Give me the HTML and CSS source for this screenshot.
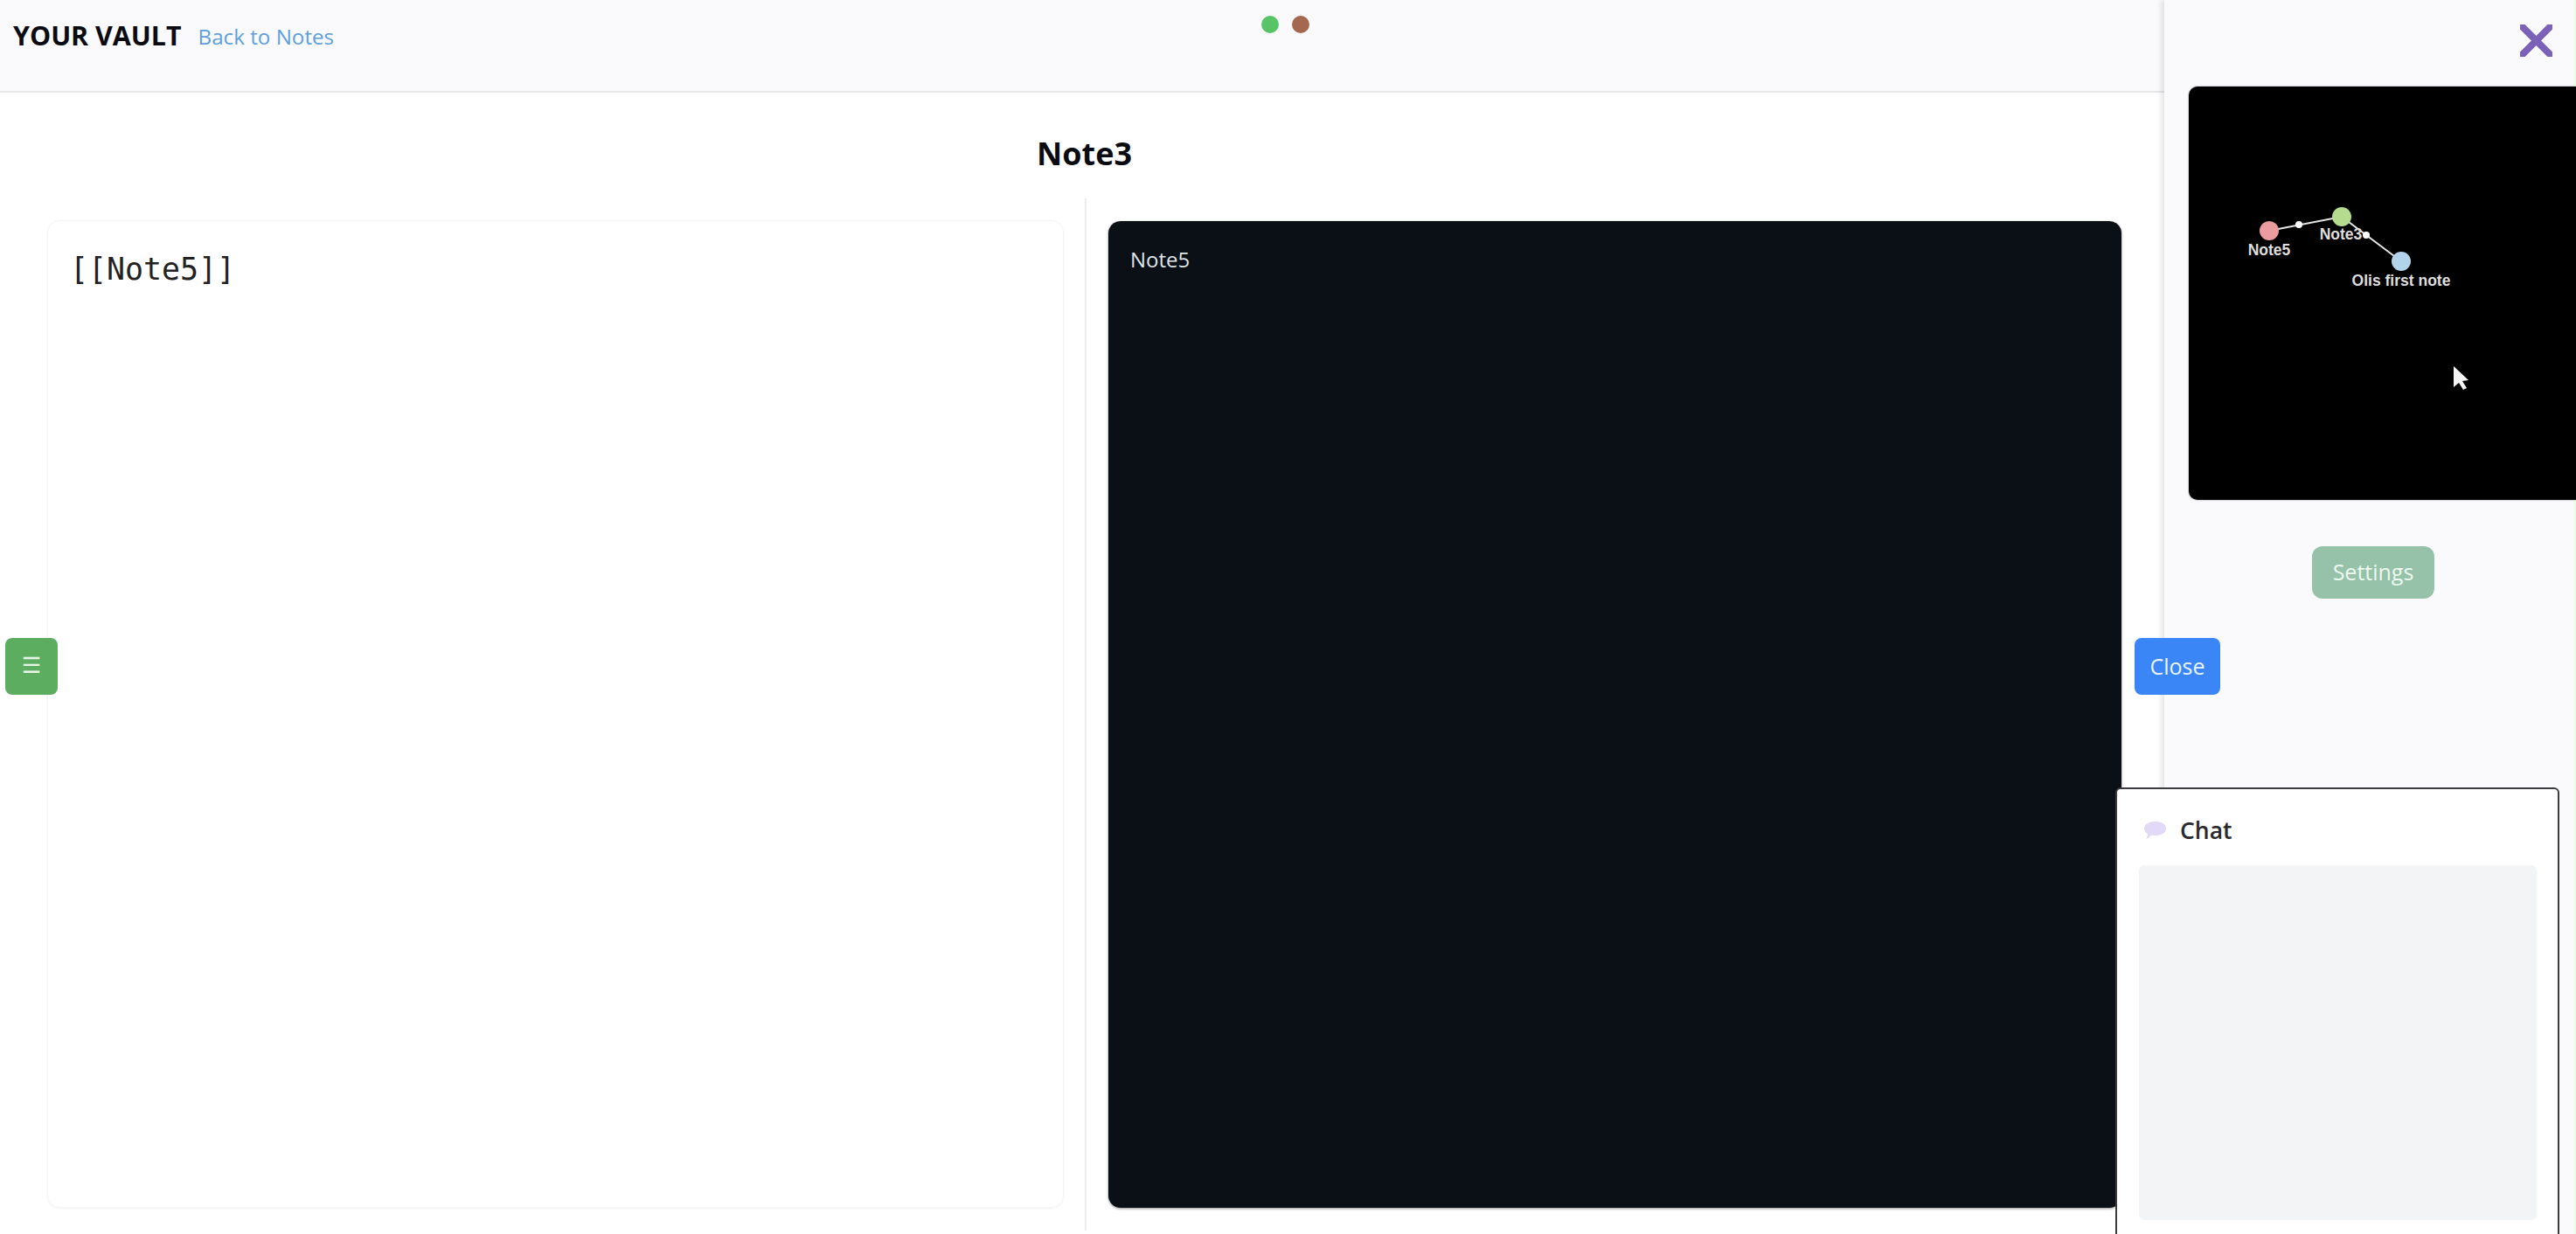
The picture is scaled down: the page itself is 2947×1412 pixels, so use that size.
FILE: index.html
```html
<!DOCTYPE html>
<html lang="en">
<head>
<meta charset="utf-8">
<title>Your Vault</title>
<link rel="stylesheet" href="styles.css">
</head>
<body>
<div class="app">
  <header class="topbar">
    <h1 class="brand">YOUR VAULT</h1>
    <a class="back-link" href="#">Back to Notes</a>
    <div class="status-dots">
      <span class="dot dot-green"></span>
      <span class="dot dot-brown"></span>
    </div>
  </header>

  <main class="main">
    <h2 class="note-title">Note3</h2>
    <div class="panes">
      <section class="pane pane-left">
        <div class="editor">[[Note5]]</div>
      </section>
      <section class="pane pane-right">
        <div class="preview">Note5</div>
      </section>
    </div>
  </main>

  <button class="menu-toggle" type="button">☰</button>
  <button class="close-toggle" type="button">Close</button>

  <aside class="sidebar">
    <div class="sidebar-top">
      <svg class="close-x" width="37" height="37" viewBox="0 0 37 37" aria-hidden="true">
        <path d="M3 3L34 34M34 3L3 34"/>
      </svg>
    </div>
    <div class="graph">
      <svg class="graph-svg" width="443" height="474" viewBox="0 0 443 474">
        <path class="edge" d="M92 165L175 149M175 149L243 200"/>
        <circle class="node-mid" cx="126" cy="158" r="4"/>
        <circle class="node-mid" cx="203" cy="170" r="4"/>
        <circle cx="92" cy="165" r="11" fill="#ec9c9e"/>
        <circle cx="175" cy="149" r="11" fill="#b5db8f"/>
        <circle cx="243" cy="200" r="11" fill="#b3d3ea"/>
        <text class="node-label" x="92" y="193">Note5</text>
        <text class="node-label" x="174" y="175">Note3</text>
        <text class="node-label" x="243" y="228">Olis first note</text>
        <path class="cursor" d="M303 320L303 344L309 339L314 347L318 345L313 337L320 336Z"/>
      </svg>
    </div>
    <button class="settings" type="button">Settings</button>
  </aside>

  <section class="chat">
    <div class="chat-head">
      <svg class="chat-icon" width="27" height="22" viewBox="0 0 27 22" aria-hidden="true">
        <path d="M14 1C21 1 26 4 26 9C26 14 21 17 14 17C12 17 10 17 9 16.500C8 18 6 20 3 21C4.500 19 5 17 5 15C2.500 13.500 1 11.500 1 9C1 4 7 1 14 1Z"/>
      </svg>
      <span class="chat-title">Chat</span>
    </div>
    <div class="chat-log"></div>
  </section>
</div>
</body>
</html>
```
FILE: styles.css
```css
* { box-sizing: border-box; }

html, body {
  margin: 0;
  height: 100%;
  overflow: hidden;
  background: #fff;
}

.app {
  position: relative;
  width: 2947px;
  height: 1412px;
  overflow: hidden;
  font-family: "Open Sans", "Noto Sans", sans-serif;
}

.topbar {
  display: flex;
  align-items: center;
  gap: 19px;
  height: 106px;
  padding: 0 0 24px 15px;
  background: #fafafc;
  border-bottom: 2px solid #e6e6e8;
}

.brand {
  margin: 0;
  font-size: 30.400px;
  font-weight: 700;
  color: #0b0b12;
}

.back-link {
  font-size: 24.200px;
  padding-top: 2px;
  color: #5f9fdc;
  text-decoration: none;
}

.status-dots {
  position: absolute;
  top: 18px;
  left: 1443px;
  display: flex;
  gap: 15px;
}

.dot {
  width: 20px;
  height: 20px;
  border-radius: 50%;
}

.dot-green { background: #58c468; }
.dot-brown { background: #a4674f; }

.main {
  width: 2481px;
}

.note-title {
  height: 121px;
  margin: 0;
  padding-top: 45px;
  text-align: center;
  font-size: 36px;
  line-height: 50px;
  font-weight: 700;
  color: #0b0b12;
}

.panes {
  display: grid;
  grid-template-columns: 1243px 1fr;
  height: 1181px;
}

.pane-left {
  padding: 25px 24px 26px 54px;
  border-right: 2px solid #ececee;
}

.pane-right {
  padding: 26px 54px 26px 25px;
}

.editor {
  height: 100%;
  padding: 29px 25px;
  border-radius: 14px;
  border: 1px solid #f5f5f6;
  box-shadow: 0 1px 3px rgba(0, 0, 0, 0.05);
  font-family: "DejaVu Sans Mono", "Liberation Mono", monospace;
  font-size: 34.900px;
  line-height: 52px;
  color: #222;
}

.preview {
  height: 100%;
  padding: 26px 25px;
  border-radius: 14px;
  background: #0b1017;
  box-shadow: 0 1px 3px rgba(0, 0, 0, 0.45);
  font-size: 24px;
  line-height: 36px;
  color: #dfe5ea;
}

.menu-toggle,
.close-toggle {
  position: absolute;
  top: 730px;
  height: 65px;
  padding: 0 0 2px;
  border: 0;
  border-radius: 8px;
  color: #e9f5ff;
  font-family: inherit;
  font-size: 25px;
  z-index: 3;
}

.menu-toggle {
  left: 6px;
  width: 60px;
  background: #5cad5f;
  font-family: "DejaVu Sans", sans-serif;
  color: #e6f5e6;
}

.close-toggle {
  left: 2442px;
  width: 98px;
  background: #3b86f6;
}

.sidebar {
  position: absolute;
  top: 0;
  right: 0;
  bottom: 0;
  width: 471px;
  display: flex;
  flex-direction: column;
  padding-left: 28px;
  background: #fafafc;
  border-right: 2px solid #ebfbe6;
  box-shadow: -4px 0 6px rgba(0, 0, 0, 0.1);
  z-index: 2;
}

.sidebar-top {
  display: flex;
  justify-content: flex-end;
  height: 99px;
  padding: 28px 25px 0 0;
}

.close-x path {
  fill: none;
  stroke: #7b62b8;
  stroke-width: 8;
  stroke-linecap: round;
}

.graph {
  width: 443px;
  height: 473px;
  background: #000;
  border-radius: 10px 0 0 10px;
  box-shadow: 0 0 2px rgba(0, 0, 0, 0.5);
}

.graph-svg { display: block; }

.edge {
  fill: none;
  stroke: #e4e4e4;
  stroke-width: 2;
}

.node-mid { fill: #fff; }

.node-label {
  font-family: "Liberation Sans", Arial, sans-serif;
  font-size: 17.500px;
  font-weight: 700;
  fill: #dedede;
  text-anchor: middle;
}

.cursor { fill: #f4f4f4; }

.settings {
  align-self: flex-start;
  width: 140px;
  height: 60px;
  margin: 53px 0 0 141px;
  padding: 0 0 2px;
  border: 0;
  border-radius: 12px;
  background: #95c2a8;
  color: #eef8f1;
  font-family: inherit;
  font-size: 25px;
  font-weight: 500;
}

.chat {
  position: absolute;
  top: 901px;
  left: 2420px;
  width: 508px;
  height: 520px;
  padding: 21px 24px 0 25px;
  background: #fff;
  border: 2px solid #3c3c40;
  border-radius: 6px;
  z-index: 4;
}

.chat-head {
  display: flex;
  align-items: center;
  gap: 15px;
  height: 52px;
  padding-left: 5px;
}

.chat-icon path { fill: #e1d9f5; }

.chat-title {
  font-size: 26.500px;
  font-weight: 600;
  color: #2a2a2e;
}

.chat-log {
  height: 406px;
  margin-top: 14px;
  background: #f3f4f6;
  border-radius: 6px;
}
```
